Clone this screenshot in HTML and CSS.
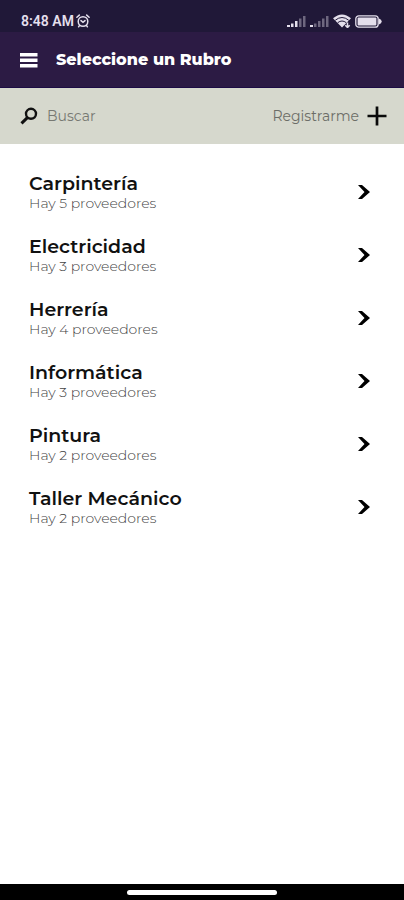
FILE: index.html
```html
<!DOCTYPE html>
<html lang="es">
<head>
<meta charset="utf-8">
<meta name="viewport" content="width=device-width, initial-scale=1">
<title>Seleccione un Rubro</title>
<link rel="stylesheet" href="styles.css">
</head>
<body>
<div class="status">
  <span class="clock">8:48 AM</span>
  <svg class="alarm" width="14" height="14" viewBox="0 0 14 14" fill="none" stroke="currentColor" stroke-width="1.5" stroke-linecap="round" aria-hidden="true"><circle cx="7" cy="7.5" r="4.8"/><path d="M.9 3.2 3.3 1.1M13.1 3.2 10.7 1.1M3.6 11.3 2.6 12.8M10.4 11.3l1 1.5M5 6.6l2 1.7 2-1.7"/></svg>
  <div class="indicators">
    <svg width="19" height="12" viewBox="0 0 19 12" fill="currentColor" aria-hidden="true"><path d="M0 10h3v2H0zM4 8.500h2.500V12H4zM8 6h2.500v6H8z"/><path opacity=".4" d="M12 3.500h2.500V12H12zM16 1h2.500v11H16z"/></svg>
    <svg width="19" height="12" viewBox="0 0 19 12" fill="currentColor" aria-hidden="true"><path d="M0 10h3v2H0z"/><path opacity=".4" d="M4 8.500h2.500V12H4zM8 6h2.500v6H8zM12 3.500h2.500V12H12zM16 1h2.500v11H16z"/></svg>
    <svg class="wifi" width="18" height="14" viewBox="0 0 18 14" aria-hidden="true"><path d="M0 4.200Q9-3.400 18 4.200L9 13.500z" fill="currentColor"/><path d="M2.300 6.200q6.700-5.400 13.400 0M4.700 8.700q4.300-3.400 8.600 0" fill="none" stroke="#201838" stroke-width="1"/><path d="M14.500 8.500v5M12.300 11.300l2.200 2.200 2.200-2.200" fill="none" stroke="currentColor" stroke-width="1.500"/></svg>
    <svg width="27" height="13" viewBox="0 0 27 13" aria-hidden="true"><rect x=".8" y=".8" width="22.400" height="11.400" rx="3" fill="none" stroke="currentColor" stroke-width="1.300"/><rect x="2.600" y="2.500" width="18.800" height="8" rx="1" fill="currentColor"/><path d="M24 3.500q2.700.8 2.700 3t-2.700 3z" fill="currentColor"/></svg>
  </div>
</div>
<header class="bar">
  <button class="menu" type="button" aria-label="Menú"><svg width="18" height="16" viewBox="0 0 18 16" fill="currentColor" aria-hidden="true"><path d="M0 1h17.500v3.500H0zM0 6.500h17.500V10H0zM0 12h17.500v3.500H0z"/></svg></button>
  <h1>Seleccione un Rubro</h1>
</header>
<div class="tools">
  <label for="search" aria-label="Buscar"><svg width="18" height="18" viewBox="0 0 18 18" fill="none" stroke="currentColor" aria-hidden="true"><circle cx="11" cy="6.800" r="5" stroke-width="2.400"/><path d="M7.400 10.600 1.500 16.300" stroke-width="3"/></svg></label>
  <input id="search" type="search" placeholder="Buscar">
  <button class="register" type="button">Registrarme<svg width="20" height="20" viewBox="0 0 20 20" fill="none" stroke="currentColor" stroke-width="2.700" aria-hidden="true"><path d="M10 .5v19M.5 10h19"/></svg></button>
</div>
<main>
  <ul class="list">
    <li><a href="#carpinteria"><span><strong>Carpintería</strong><small>Hay 5 proveedores</small></span><svg class="chevron" viewBox="0 0 12 14"><path d="M0 0h4l8 7-8 7H0l6.500-7z"/></svg></a></li>
    <li><a href="#electricidad"><span><strong>Electricidad</strong><small>Hay 3 proveedores</small></span><svg class="chevron" viewBox="0 0 12 14"><path d="M0 0h4l8 7-8 7H0l6.500-7z"/></svg></a></li>
    <li><a href="#herreria"><span><strong>Herrería</strong><small>Hay 4 proveedores</small></span><svg class="chevron" viewBox="0 0 12 14"><path d="M0 0h4l8 7-8 7H0l6.500-7z"/></svg></a></li>
    <li><a href="#informatica"><span><strong>Informática</strong><small>Hay 3 proveedores</small></span><svg class="chevron" viewBox="0 0 12 14"><path d="M0 0h4l8 7-8 7H0l6.500-7z"/></svg></a></li>
    <li><a href="#pintura"><span><strong>Pintura</strong><small>Hay 2 proveedores</small></span><svg class="chevron" viewBox="0 0 12 14"><path d="M0 0h4l8 7-8 7H0l6.500-7z"/></svg></a></li>
    <li><a href="#taller-mecanico"><span><strong>Taller Mecánico</strong><small>Hay 2 proveedores</small></span><svg class="chevron" viewBox="0 0 12 14"><path d="M0 0h4l8 7-8 7H0l6.500-7z"/></svg></a></li>
  </ul>
</main>
<div class="gesture"><span></span></div>
</body>
</html>
```
FILE: styles.css
```css
* { box-sizing: border-box; }
body {
  margin: 0;
  min-height: 100vh;
  display: flex;
  flex-direction: column;
  background: #fff;
  color: #111;
  font-family: Montserrat, Inter, sans-serif;
}
button {
  padding: 0;
  border: 0;
  background: none;
  color: inherit;
  font: inherit;
}
svg { display: block; flex: none; }
.status {
  display: flex;
  align-items: center;
  gap: 2px;
  padding: 10px 22px 0 21px;
  height: 32px;
  background: #201838;
  color: #e4dfec;
}
.clock {
  font-family: Roboto, sans-serif;
  font-size: 14px;
  font-weight: 600;
}
.indicators {
  display: flex;
  align-items: center;
  gap: 4px;
  margin-left: auto;
}
.bar {
  display: flex;
  align-items: center;
  gap: 18px;
  height: 56px;
  padding: 0 20px;
  background: #2c1b44;
  border-bottom: 1px solid #1c0c45;
  color: #fff;
}
h1 {
  margin: 0;
  font-size: 16px;
  font-weight: 800;
}
.tools {
  display: flex;
  align-items: center;
  gap: 9px;
  height: 56px;
  padding: 0 17px 0 20px;
  background: #d6d8cd;
  color: #111;
}
.tools input {
  flex: 1;
  min-width: 0;
  padding: 0;
  border: 0;
  outline: 0;
  background: none;
  color: #333;
  font: 400 14px Montserrat, Inter, sans-serif;
}
.tools input::placeholder { color: #777872; opacity: 1; }
.register {
  display: flex;
  align-items: center;
  gap: 8px;
  color: #6c6d67;
  font-size: 14px;
}
.register svg { color: #0a0a0a; }
main { flex: 1; }
.list {
  margin: 0;
  padding: 16px 0;
  list-style: none;
}
.list a {
  display: flex;
  align-items: center;
  justify-content: space-between;
  height: 63px;
  padding: 0 34px 0 29px;
  color: #111;
  text-decoration: none;
}
strong, small { display: block; }
strong {
  font-size: 19px;
  font-weight: 600;
  line-height: 22px;
}
small {
  color: #444;
  font-size: 14px;
  font-weight: 300;
  line-height: 16px;
}
.chevron {
  width: 12px;
  height: 14px;
  fill: #000;
}
.gesture {
  display: flex;
  align-items: center;
  justify-content: center;
  height: 16px;
  background: #000;
}
.gesture span {
  width: 37%;
  height: 5px;
  border-radius: 3px;
  background: #fff;
}
```
